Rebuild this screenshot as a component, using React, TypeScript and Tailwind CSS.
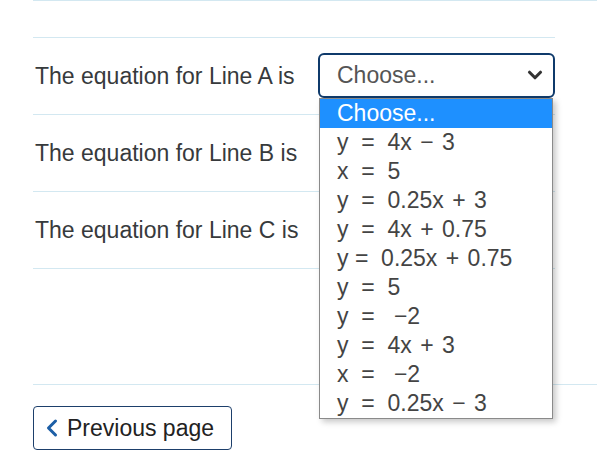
import { ChevronDown, ChevronLeft } from 'lucide-react';

const NB = '\u00a0';

// [left side, right side] so the right side can get a little wider spacing
const options: [string, string][] = [
  ['Choose...', ''],
  [`y${NB}${NB}=${NB}${NB}`, '4x − 3'],
  [`x${NB}${NB}=${NB}${NB}`, '5'],
  [`y${NB}${NB}=${NB}${NB}`, '0.25x + 3'],
  [`y${NB}${NB}=${NB}${NB}`, '4x + 0.75'],
  [`y${NB}=${NB}${NB}`, '0.25x + 0.75'],
  [`y${NB}${NB}=${NB}${NB}`, '5'],
  [`y${NB}${NB}=${NB}${NB}${NB}`, '−2'],
  [`y${NB}${NB}=${NB}${NB}`, '4x + 3'],
  [`x${NB}${NB}=${NB}${NB}${NB}`, '−2'],
  [`y${NB}${NB}=${NB}${NB}`, '0.25x − 3'],
];

function FakeSelect({ open }: { open?: boolean }) {
  return (
    <div className="relative mb-[2px]">
      <div className="w-[237px] h-[45px] flex items-center justify-between rounded-[6px] border-2 border-[#0f3a6b] bg-white pl-[17px] pr-[7px] text-[#555]">
        <span>Choose...</span>
        <ChevronDown className="size-[22px] text-[#333]" strokeWidth={3.4} />
      </div>
      {open && (
        <ul className="absolute left-[1px] top-[45px] z-10 w-[234px] border border-[#8a8a8a] bg-white shadow-[3px_3px_6px_rgba(0,0,0,0.22)]">
          {options.map(([lhs, rhs], i) => (
            <li
              key={i}
              className={`h-[29px] flex items-center pl-[17px] whitespace-pre leading-none ${
                i === 0 ? 'bg-[#1e90ff] text-white' : 'text-[#444]'
              }`}
            >
              {lhs}
              <span className="[word-spacing:2px]">{rhs}</span>
            </li>
          ))}
        </ul>
      )}
    </div>
  );
}

function Row({ line, open }: { line: string; open?: boolean }) {
  return (
    <div className="h-[77px] border-b border-[#d3e8f1] flex items-center">
      <div className="w-[288px] pl-[2px]">The equation for Line {line} is</div>
      {line === 'A' && <FakeSelect open={open} />}
    </div>
  );
}

export default function App() {
  return (
    <div
      className="min-h-[451px] bg-white pl-[33px] text-[23px] text-[#373a3c] overflow-hidden"
      style={{ fontFamily: '"Liberation Sans", Arial, sans-serif' }}
    >
      <div className="border-t border-[#d3e8f1]" />
      <div className="h-[36px]" />
      <div className="w-[522px]">
        <div className="border-t border-[#d3e8f1]" />
        <Row line="A" open />
        <Row line="B" />
        <Row line="C" />
      </div>
      <div className="h-[115px]" />
      <div className="border-t border-[#d3e8f1]" />
      <div className="pt-[21px]">
        <button className="w-[199px] h-[44px] flex items-center rounded-[4px] border border-[#1d3f6b] bg-white pl-[4px] text-[#222]">
          <ChevronLeft className="size-[28px] text-[#1d5fa6]" strokeWidth={2.6} />
          <span className="ml-[1px]">Previous page</span>
        </button>
      </div>
    </div>
  );
}
